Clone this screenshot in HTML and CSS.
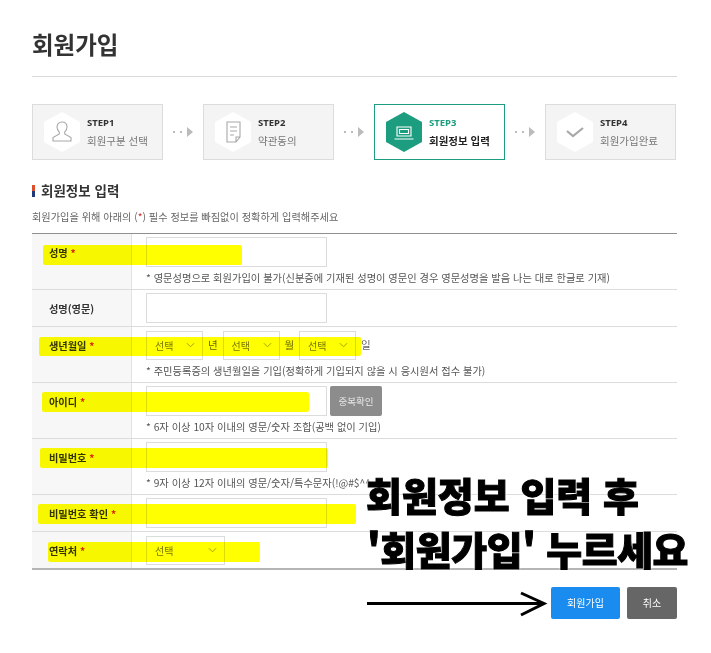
FILE: index.html
```html
<!DOCTYPE html>
<html lang="ko">
<head>
<meta charset="utf-8">
<title>회원가입</title>
<link rel="stylesheet" href="styles.css">
</head>
<body>
<main class="page">
  <h1 class="title">회원가입</h1>
  <ol class="steps">
    <li class="step">
      <svg class="hex" viewBox="0 0 38 40"><polygon points="19,0 37,10 37,30 19,40 1,30 1,10" fill="#fff"/><path d="M19 10c-3.500 0-5 2.500-5 5 0 2.500 1.200 4 2.300 5.200v1.800L10 25.500v3.500h18v-3.500L21.700 22v-1.800c1.100-1.200 2.300-2.700 2.300-5.200 0-2.500-1.500-5-5-5z" fill="none" stroke="#a8a8a8" stroke-width="1.100"/></svg>
      <div class="step-text"><b>STEP1</b><span>회원구분 선택</span></div>
    </li>
    <li class="sep"><i></i><i></i><em></em></li>
    <li class="step">
      <svg class="hex" viewBox="0 0 38 40"><polygon points="19,0 37,10 37,30 19,40 1,30 1,10" fill="#fff"/><path d="M13 10h13v15l-4 5h-9zM26 25h-4v5M16 15h7M16 19h7M16 23h4" fill="none" stroke="#a8a8a8" stroke-width="1.100"/></svg>
      <div class="step-text"><b>STEP2</b><span>약관동의</span></div>
    </li>
    <li class="sep"><i></i><i></i><em></em></li>
    <li class="step active">
      <svg class="hex" viewBox="0 0 38 40"><polygon points="19,0 37,10 37,30 19,40 1,30 1,10" fill="#1d9d7f"/><path d="M12 15h14v9H12zM14.500 17.500h9v4h-9zM9.500 27h19" fill="none" stroke="#fff" stroke-width="1.100"/></svg>
      <div class="step-text"><b>STEP3</b><span>회원정보 입력</span></div>
    </li>
    <li class="sep"><i></i><i></i><em></em></li>
    <li class="step">
      <svg class="hex" viewBox="0 0 38 40"><polygon points="19,0 37,10 37,30 19,40 1,30 1,10" fill="#fff"/><path d="M11 19l6 5 10-8" fill="none" stroke="#a8a8a8" stroke-width="2.200"/></svg>
      <div class="step-text"><b>STEP4</b><span>회원가입완료</span></div>
    </li>
  </ol>

  <h2 class="section">회원정보 입력</h2>
  <p class="lead">회원가입을 위해 아래의 (<span class="req">*</span>) 필수 정보를 빠짐없이 정확하게 입력해주세요</p>

  <div class="form">
    <div class="row h56">
      <div class="label">성명 <span class="req">*</span></div>
      <div class="field">
        <div class="line"><span class="input"></span></div>
        <p class="note">* 영문성명으로 회원가입이 불가(신분증에 기재된 성명이 영문인 경우 영문성명을 발음 나는 대로 한글로 기재)</p>
      </div>
    </div>
    <div class="row h37">
      <div class="label">성명(영문)</div>
      <div class="field"><div class="line"><span class="input"></span></div></div>
    </div>
    <div class="row h56">
      <div class="label">생년월일 <span class="req">*</span></div>
      <div class="field">
        <div class="line">
          <span class="select">선택<svg viewBox="0 0 10 6"><path d="M1 1l4 4 4-4" fill="none" stroke="#999"/></svg></span><span class="unit">년</span>
          <span class="select">선택<svg viewBox="0 0 10 6"><path d="M1 1l4 4 4-4" fill="none" stroke="#999"/></svg></span><span class="unit">월</span>
          <span class="select">선택<svg viewBox="0 0 10 6"><path d="M1 1l4 4 4-4" fill="none" stroke="#999"/></svg></span><span class="unit">일</span>
        </div>
        <p class="note">* 주민등록증의 생년월일을 기입(정확하게 기입되지 않을 시 응시원서 접수 불가)</p>
      </div>
    </div>
    <div class="row h56">
      <div class="label">아이디 <span class="req">*</span></div>
      <div class="field">
        <div class="line"><span class="input"></span><span class="check">중복확인</span></div>
        <p class="note">* 6자 이상 10자 이내의 영문/숫자 조합(공백 없이 기입)</p>
      </div>
    </div>
    <div class="row h56">
      <div class="label">비밀번호 <span class="req">*</span></div>
      <div class="field">
        <div class="line"><span class="input"></span></div>
        <p class="note">* 9자 이상 12자 이내의 영문/숫자/특수문자(!@#$^^</p>
      </div>
    </div>
    <div class="row h37">
      <div class="label">비밀번호 확인 <span class="req">*</span></div>
      <div class="field"><div class="line"><span class="input"></span></div></div>
    </div>
    <div class="row h36 last">
      <div class="label">연락처 <span class="req">*</span></div>
      <div class="field"><div class="line"><span class="select wide">선택<svg viewBox="0 0 10 6"><path d="M1 1l4 4 4-4" fill="none" stroke="#999"/></svg></span></div></div>
    </div>
  </div>

  <div class="actions">
    <span class="btn primary">회원가입</span>
    <span class="btn cancel">취소</span>
  </div>
</main>

<div class="mark m1"></div>
<div class="mark m2"></div>
<div class="mark m3"></div>
<div class="mark m4"></div>
<div class="mark m5"></div>
<div class="mark m6"></div>

<div class="note-big n1">회원정보 입력 후</div>
<div class="note-big n2">'회원가입' 누르세요</div>
<svg class="arrow" viewBox="0 0 182 26"><path d="M1 12.500H178M155 2l23 10.500L155 24" fill="none" stroke="#000" stroke-width="3"/></svg>
</body>
</html>
```
FILE: styles.css
```css
* { box-sizing: border-box; }
html, body { margin: 0; padding: 0; }
body {
  width: 711px;
  height: 653px;
  overflow: hidden;
  position: relative;
  background: #fff;
  font-family: "Noto Sans CJK KR", "Noto Sans", sans-serif;
  color: #555;
}
.page { padding: 0 34px 0 32px; }
.title {
  margin: 0;
  height: 77px;
  padding-top: 26px;
  font-size: 23.500px;
  line-height: 36px;
  font-weight: 700;
  color: #333;
  border-bottom: 1px solid #d9d9d9;
}
.steps {
  list-style: none;
  margin: 27px 0 0;
  padding: 0;
  display: flex;
  height: 56px;
}
.step {
  width: 131px;
  display: flex;
  align-items: center;
  padding-left: 10px;
  gap: 6px;
  background: #f4f4f4;
  border: 1px solid #dcdcdc;
}
.step.active { background: #fff; border-color: #1d9d7f; }
.hex { width: 38px; height: 40px; flex: none; }
.step-text { display: flex; flex-direction: column; font-size: 10.500px; line-height: 18px; color: #777; }
.step-text b { font-size: 9.500px; font-weight: 700; color: #333; font-family: "Noto Sans", sans-serif; }
.step.active b { color: #1d9d7f; }
.step.active span { color: #222; font-weight: 700; }
.sep { width: 40px; display: flex; align-items: center; justify-content: center; gap: 5px; }
.sep i { width: 2px; height: 2px; background: #bbb; }
.sep em { width: 0; height: 0; border-left: 6px solid #bbb; border-top: 5px solid transparent; border-bottom: 5px solid transparent; }
.section {
  margin: 21px 0 0;
  padding-left: 9px;
  height: 18px;
  font-size: 13.500px;
  line-height: 18px;
  font-weight: 700;
  color: #333;
  background: linear-gradient(#d9502e 0 50%, #1f3a7a 50% 100%) 0 4px / 3px 12px no-repeat;
}
.lead { margin: 10px 0 0; font-size: 10.200px; line-height: 16px; color: #666; height: 16px; }
.req { color: #d8261c; }
.form { margin-top: 8px; border-top: 1px solid #8f8f8f; border-bottom: 2px solid #b5b5b5; }
.row { display: flex; border-bottom: 1px solid #dcdcdc; }
.row.last { border-bottom: 0; }
.h56 { height: 56px; }
.h37 { height: 37px; }
.h36 { height: 36px; }
.label {
  width: 100px;
  flex: none;
  padding: 11px 0 0 17px;
  font-size: 10.200px;
  line-height: 16px;
  font-weight: 700;
  color: #333;
  background: #f7f7f7;
  border-right: 1px solid #e2e2e2;
}
.field { padding: 3px 0 0 14px; flex: 1; }
.line { display: flex; align-items: center; height: 30px; }
.input { width: 181px; height: 30px; background: #fff; border: 1px solid #dcdcdc; }
.select {
  width: 57px;
  height: 29px;
  padding: 0 7px 0 8px;
  display: flex;
  align-items: center;
  justify-content: space-between;
  font-size: 10px;
  color: #777;
  border: 1px solid #dcdcdc;
}
.select svg { width: 9px; height: 6px; }
.select.wide { width: 79px; }
.unit { width: 19.500px; text-align: center; font-size: 10.500px; color: #666; padding-bottom: 2px; }
.check {
  width: 52px;
  height: 30px;
  margin-left: 3px;
  background: #8c8c8c;
  border-radius: 2px;
  color: #e8e8e8;
  font-size: 9.500px;
  line-height: 30px;
  text-align: center;
}
.note { margin: 3px 0 0; font-size: 10.250px; line-height: 16px; color: #555; white-space: nowrap; }
.actions { display: flex; justify-content: flex-end; gap: 7px; margin-top: 17px; }
.btn {
  height: 32px;
  border-radius: 2px;
  color: #fff;
  font-size: 10px;
  line-height: 32px;
  text-align: center;
}
.primary { width: 69px; background: #1a8cf0; }
.cancel { width: 50px; background: #666; }
.mark { position: absolute; background: #ffff00; mix-blend-mode: multiply; border-radius: 2px; }
.m1 { left: 43px; top: 245px; width: 199px; height: 20px; }
.m2 { left: 39px; top: 337px; width: 322px; height: 19px; }
.m3 { left: 42px; top: 392px; width: 267px; height: 20px; }
.m4 { left: 40px; top: 448px; width: 288px; height: 20px; }
.m5 { left: 38px; top: 504px; width: 318px; height: 20px; }
.m6 { left: 48px; top: 542px; width: 212px; height: 20px; }
.note-big {
  position: absolute;
  font-size: 39px;
  line-height: 46px;
  font-weight: 900;
  color: #000;
  white-space: nowrap;
  -webkit-text-stroke: 1px #000;
  text-shadow: 0 0 3px #fff, 0 0 3px #fff;
}
.n1 { left: 366px; top: 471px; }
.n2 { left: 367px; top: 525px; letter-spacing: -0.400px; }
.arrow { position: absolute; left: 366px; top: 591px; width: 182px; height: 26px; }
```
